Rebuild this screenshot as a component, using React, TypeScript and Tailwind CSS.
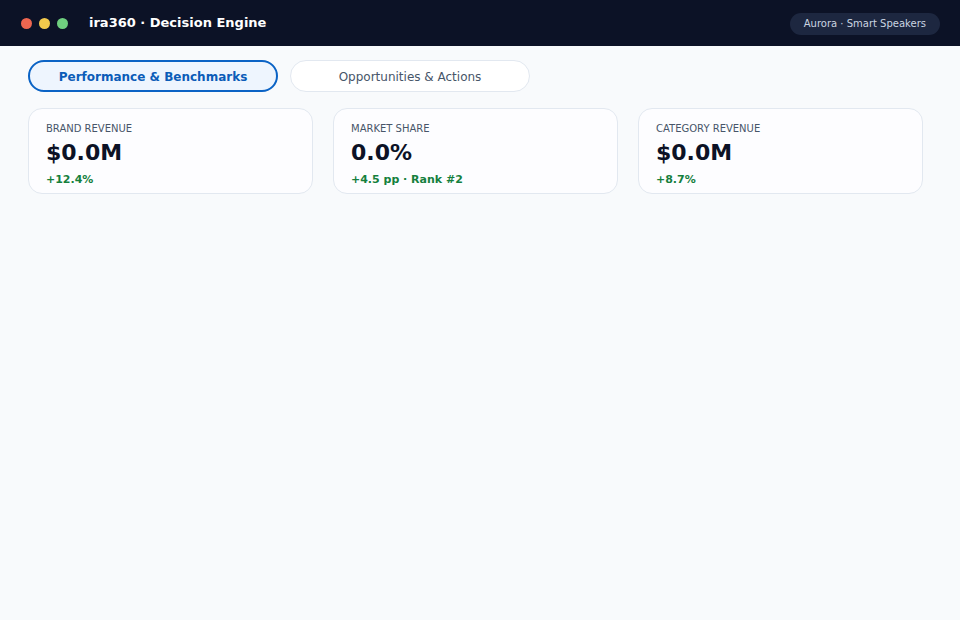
const tabs = ["Performance & Benchmarks", "Opportunities & Actions"];

const kpis = [
  { label: "Brand Revenue", value: "$0.0M", delta: "+12.4%" },
  { label: "Market Share", value: "0.0%", delta: "+4.5 pp · Rank #2" },
  { label: "Category Revenue", value: "$0.0M", delta: "+8.7%" },
];

export default function App() {
  const active = 0;

  return (
    <div className="min-h-[620px] bg-[#f8fafc] font-['DejaVu_Sans',sans-serif]">
      <header className="flex h-[46px] items-center justify-between bg-[#0c1226] pl-[21px] pr-[20px]">
        <div className="flex items-center">
          <div className="flex items-center gap-[7px]">
            <span className="h-[11px] w-[11px] rounded-full bg-[#ef6650]" />
            <span className="h-[11px] w-[11px] rounded-full bg-[#f2c94c]" />
            <span className="h-[11px] w-[11px] rounded-full bg-[#6fcf7f]" />
          </div>
          <h1 className="ml-[21px] text-[13px] font-bold text-white">ira360 · Decision Engine</h1>
        </div>
        <div className="mt-px rounded-full bg-[#1d2740] px-[14px] py-[5px] text-[10px] leading-[12px] text-[#cbd5e1]">
          Aurora · Smart Speakers
        </div>
      </header>

      <main className="px-[28px] pt-[14px]">
        <div className="flex gap-[12px]">
          {tabs.map((tab, i) => (
            <button
              key={tab}
              className={
                i === active
                  ? "h-[32px] w-[250px] rounded-full border-2 border-[#0b63c5] bg-[#eef5fe] pt-px text-[12px] font-bold text-[#0b5cb8]"
                  : "h-[32px] w-[240px] rounded-full border border-[#e2e8f0] bg-white pt-px text-[12px] text-[#475569]"
              }
            >
              {tab}
            </button>
          ))}
        </div>

        <div className="mt-[16px] grid w-[895px] grid-cols-3 gap-[20px]">
          {kpis.map((k) => (
            <div
              key={k.label}
              className="h-[86px] rounded-[14px] border border-[#e2e8f0] bg-[#fdfdff] px-[17px] pt-[12px]"
            >
              <div className="text-[10px] uppercase leading-[16px] text-[#475569]">{k.label}</div>
              <div className="mt-[2px] text-[22px] font-bold leading-[28px] text-[#0c1226]">{k.value}</div>
              <div className="mt-[5px] text-[11px] font-bold leading-[16px] text-[#15803d]">{k.delta}</div>
            </div>
          ))}
        </div>
      </main>
    </div>
  );
}
